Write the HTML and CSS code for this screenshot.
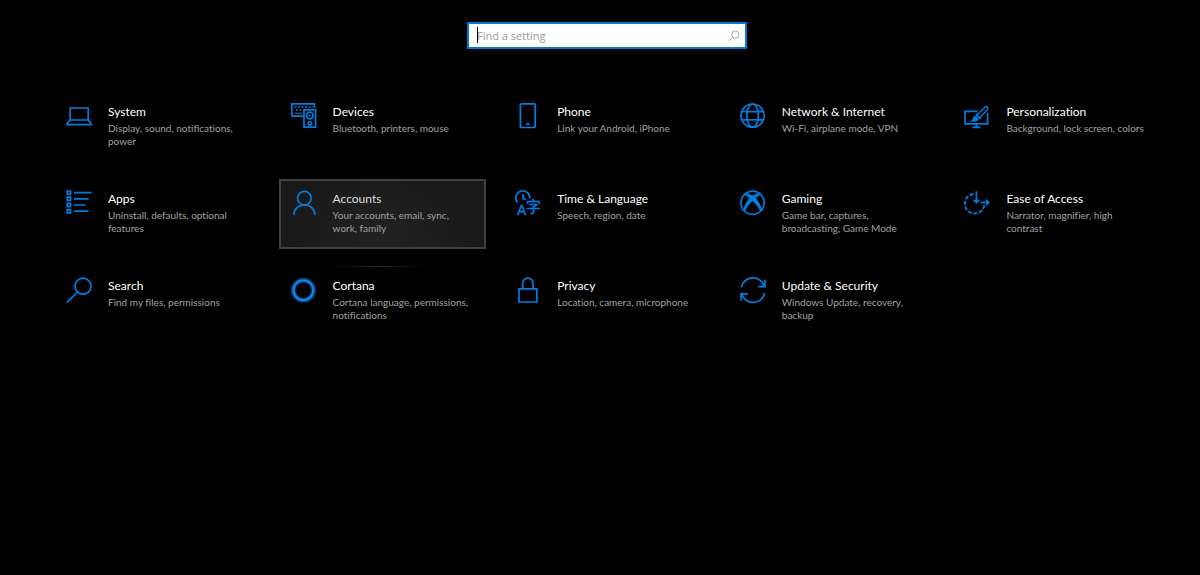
FILE: index.html
```html
<!DOCTYPE html>
<html lang="en">
<head>
    <meta charset="UTF-8">
    <meta name="viewport" content="width=device-width, initial-scale=1.0">
    <title>Settings</title>
    <link rel="stylesheet" href="styles.css">
</head>
<body>
    <main class="settings">
        <form class="search-box" role="search">
            <input class="search-input" type="text" placeholder="Find a setting" aria-label="Find a setting">
            <svg class="search-icon" viewBox="0 0 12 12" aria-hidden="true">
                <circle cx="7.4" cy="4.6" r="3.6"/>
                <path d="M4.8 7.2 L0.8 11.2"/>
            </svg>
        </form>

        <nav class="tiles">
            <a class="tile" href="#system">
                <svg class="icon" viewBox="0 0 26 26" aria-hidden="true">
                    <path d="M4.2 17 V5 H22.2 V17 Z M4.2 17 L1 20.4 V21.6 H25 V20.4 L22.2 17"/>
                </svg>
                <span class="text">
                    <span class="title">System</span>
                    <span class="desc">Display, sound, notifications, power</span>
                </span>
            </a>
            <a class="tile" href="#devices">
                <svg class="icon" viewBox="0 0 26 26" aria-hidden="true">
                    <path d="M12.5 13.2 H2 Q0.8 13.2 0.8 12 V0.9 H23.4 V5"/>
                    <path class="dots" d="M3.5 4 H21.5 M5 7 H12"/>
                    <path class="thin" d="M4 10.2 H11"/>
                    <path d="M13 6.8 H24.6 V24.2 H13 Z"/>
                    <circle cx="18.8" cy="12.5" r="3.3"/>
                    <circle class="fill" cx="18.8" cy="12.5" r="1"/>
                    <circle cx="18.8" cy="20.2" r="1.7"/>
                </svg>
                <span class="text">
                    <span class="title">Devices</span>
                    <span class="desc">Bluetooth, printers, mouse</span>
                </span>
            </a>
            <a class="tile" href="#phone">
                <svg class="icon" viewBox="0 0 26 26" aria-hidden="true">
                    <rect x="5.4" y="0.9" width="14.8" height="23.6" rx="1"/>
                    <path d="M11 21 H14.6"/>
                </svg>
                <span class="text">
                    <span class="title">Phone</span>
                    <span class="desc">Link your Android, iPhone</span>
                </span>
            </a>
            <a class="tile" href="#network">
                <svg class="icon" viewBox="0 0 26 26" aria-hidden="true">
                    <circle cx="12.6" cy="12.6" r="11.6"/>
                    <ellipse cx="12.6" cy="12.6" rx="5.8" ry="11.6"/>
                    <path d="M1.6 8.6 H23.6 M1.6 16.8 H23.6"/>
                </svg>
                <span class="text">
                    <span class="title">Network &amp; Internet</span>
                    <span class="desc">Wi-Fi, airplane mode, VPN</span>
                </span>
            </a>
            <a class="tile" href="#personalization">
                <svg class="icon" viewBox="0 0 26 26" aria-hidden="true">
                    <path d="M13.5 8.4 H1 V20.8 H23.6 V10 M12.4 20.8 V24.2 M8.4 24.4 H16.4"/>
                    <path class="brush" d="M12.2 12.8 L20.8 4.2 Q22.4 2.8 23.6 4 Q24.6 5.2 23.2 6.8 L15 15.6 M12 10.8 L17 16"/>
                    <path class="fill" d="M12 13 L15 16 Q14 19.6 5 18.6 Q8.4 17.8 8.8 15.2 Q9.6 12.4 12 13 Z"/>
                </svg>
                <span class="text">
                    <span class="title">Personalization</span>
                    <span class="desc">Background, lock screen, colors</span>
                </span>
            </a>

            <a class="tile" href="#apps">
                <svg class="icon" viewBox="0 0 26 26" aria-hidden="true">
                    <path d="M1.3 1 H4.5 V4.2 H1.3 Z M1.3 7.2 H4.5 V10.4 H1.3 Z M1.3 13.4 H4.5 V16.6 H1.3 Z M1.3 19.6 H4.5 V22.8 H1.3 Z"/>
                    <path d="M8 2.6 H25.6 M8 8.8 H22.6 M8 15 H19.4 M8 21.2 H22.6"/>
                </svg>
                <span class="text">
                    <span class="title">Apps</span>
                    <span class="desc">Uninstall, defaults, optional features</span>
                </span>
            </a>
            <a class="tile tile-hover" href="#accounts">
                <svg class="icon" viewBox="0 0 26 26" aria-hidden="true">
                    <circle cx="13.4" cy="8.2" r="6.8"/>
                    <path d="M2.8 24.8 C3.6 11.6 23.2 11.6 24 24.8"/>
                </svg>
                <span class="text">
                    <span class="title">Accounts</span>
                    <span class="desc">Your accounts, email, sync, work, family</span>
                </span>
            </a>
            <a class="tile" href="#time">
                <svg class="icon" viewBox="0 0 26 26" aria-hidden="true">
                    <path d="M2.4 12.4 A7 7 0 1 1 14.8 8.4 M8 4 V9 H11.4"/>
                    <text class="glyph" x="2" y="25" font-size="14">A</text>
                    <text class="glyph" x="11" y="22.4" font-size="15">字</text>
                </svg>
                <span class="text">
                    <span class="title">Time &amp; Language</span>
                    <span class="desc">Speech, region, date</span>
                </span>
            </a>
            <a class="tile" href="#gaming">
                <svg class="icon" viewBox="0 0 26 26" aria-hidden="true">
                    <circle cx="12.6" cy="12.8" r="11.6"/>
                    <path class="fill" d="M5 3.6 Q8 2.8 12.6 5.6 Q17.2 2.8 20.2 3.6 L21.6 5 Q19 4.8 15.8 8 Q20.6 13.6 22.2 20.2 L20.4 22 Q18.4 16.4 12.6 11 Q6.8 16.4 4.8 22 L3 20.2 Q4.6 13.6 9.4 8 Q6.2 4.8 3.6 5 Z"/>
                </svg>
                <span class="text">
                    <span class="title">Gaming</span>
                    <span class="desc">Game bar, captures, broadcasting, Game Mode</span>
                </span>
            </a>
            <a class="tile" href="#ease">
                <svg class="icon" viewBox="0 0 26 26" aria-hidden="true">
                    <path class="dash" d="M9.4 4 A9.8 9.8 0 1 0 20.4 15"/>
                    <path d="M12.4 1.2 V12.4 M9.6 9.8 L12.4 12.6 L15.2 9.8 M16.4 12.4 H25 M22 9.6 L24.8 12.4 L22 15.2"/>
                </svg>
                <span class="text">
                    <span class="title">Ease of Access</span>
                    <span class="desc">Narrator, magnifier, high contrast</span>
                </span>
            </a>

            <a class="tile" href="#search">
                <svg class="icon" viewBox="0 0 26 26" aria-hidden="true">
                    <circle cx="17" cy="9.2" r="8"/>
                    <path d="M11.4 15 L0.8 25.6"/>
                </svg>
                <span class="text">
                    <span class="title">Search</span>
                    <span class="desc">Find my files, permissions</span>
                </span>
            </a>
            <a class="tile tile-lit" href="#cortana">
                <svg class="icon" viewBox="0 0 26 26" aria-hidden="true">
                    <circle class="halo" cx="12.4" cy="13.2" r="10.2"/>
                    <circle class="ring" cx="12.4" cy="13.2" r="9.8"/>
                </svg>
                <span class="text">
                    <span class="title">Cortana</span>
                    <span class="desc">Cortana language, permissions, notifications</span>
                </span>
            </a>
            <a class="tile" href="#privacy">
                <svg class="icon" viewBox="0 0 26 26" aria-hidden="true">
                    <path d="M4 11.8 H21.8 V25 H4 Z M7.7 11.8 V6.4 A5.2 5.2 0 0 1 18.1 6.4 V11.8"/>
                </svg>
                <span class="text">
                    <span class="title">Privacy</span>
                    <span class="desc">Location, camera, microphone</span>
                </span>
            </a>
            <a class="tile" href="#update">
                <svg class="icon" viewBox="0 0 26 26" aria-hidden="true">
                    <path d="M1.2 10.4 A12 12 0 0 1 24.4 9.4 M25 2.8 V9.6 H18"/>
                    <path d="M24.8 16 A12 12 0 0 1 1.6 17 M1 23.6 V16.8 H8"/>
                </svg>
                <span class="text">
                    <span class="title">Update &amp; Security</span>
                    <span class="desc">Windows Update, recovery, backup</span>
                </span>
            </a>
        </nav>
    </main>
</body>
</html>
```
FILE: styles.css
```css
* {
    box-sizing: border-box;
}

body {
    margin: 0;
    min-height: 100vh;
    background-color: #000;
    font-family: "Segoe UI", Lato, "Open Sans", sans-serif;
    font-variant-ligatures: none;
}

.settings {
    display: flex;
    flex-direction: column;
    align-items: center;
    padding: 22px 40px 22px 54px;
}

/* search */
.search-box {
    position: relative;
    display: flex;
    align-items: center;
    width: 280px;
    height: 27px;
    margin-bottom: 43px;
    padding: 0 5px 0 8px;
    border: 2px solid #0078d7;
    background-color: #fff;
}

/* text cursor */
.search-box::before {
    content: "";
    position: absolute;
    top: 3px;
    left: 8px;
    width: 1px;
    height: 16px;
    background-color: #000;
}

.search-input {
    flex: 1;
    min-width: 0;
    padding: 0;
    border: 0;
    outline: 0;
    background: none;
    font-family: "Segoe UI", "Open Sans", sans-serif;
    font-size: 11px;
    line-height: 16px;
    color: #000;
}

.search-input::placeholder {
    color: #999;
    opacity: 1;
}

.search-icon {
    width: 12px;
    height: 12px;
    fill: none;
    stroke: #aaa;
}

/* categories */
.tiles {
    display: grid;
    grid-template-columns: repeat(5, 1fr);
    gap: 17px;
    width: 100%;
}

.tile {
    display: flex;
    gap: 16px;
    min-height: 70px;
    padding: 11px 12px;
    color: #fff;
    text-decoration: none;
}

.tile-hover {
    outline: 2px solid #404040;
    outline-offset: -2px;
    background: radial-gradient(circle at 50% 100%, #222, #191919 80%);
}

.tile-lit {
    background: linear-gradient(to right, transparent 25%, #2a2a2a 48%, transparent 72%) top / 100% 1px no-repeat;
}

.text {
    flex: 1;
    min-width: 0;
}

.title,
.desc {
    display: block;
}

.title {
    margin-bottom: 2px;
    font-size: 12px;
    line-height: 17px;
}

.desc {
    font-size: 10px;
    line-height: 13px;
    color: #a0a0a0;
}

.tile-hover .title {
    color: #ddd;
}

/* icons */
.icon {
    flex: none;
    width: 26px;
    height: 26px;
    overflow: visible;
    fill: none;
    stroke: #007de0;
    stroke-width: 1.7;
}

.fill {
    fill: #007de0;
    stroke: none;
}

.brush {
    stroke-width: 1.4;
}

.thin {
    stroke-width: 1;
}

.dots {
    stroke-dasharray: 2 1.5;
}

.dash {
    stroke-width: 1.9;
    stroke-dasharray: 4 1.6;
}

.halo {
    stroke: #00407a;
    stroke-width: 4.4;
}

.ring {
    stroke: #0a84ea;
    stroke-width: 2.4;
}

.glyph {
    fill: #007de0;
    stroke: #007de0;
    stroke-width: 0.4;
    font-family: "Liberation Sans", "Noto Sans CJK SC", sans-serif;
}
```
